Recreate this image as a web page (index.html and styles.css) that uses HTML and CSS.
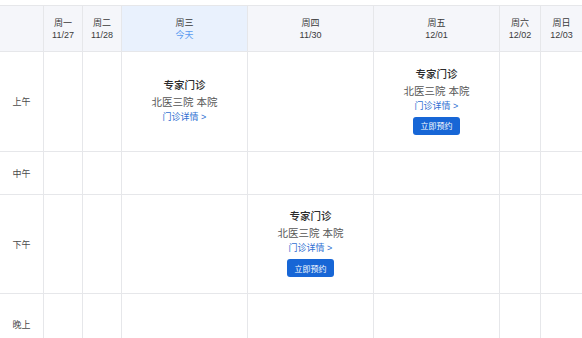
FILE: index.html
```html
<!DOCTYPE html>
<html lang="zh-CN">
<head>
<meta charset="utf-8">
<link rel="stylesheet" href="styles.css">
</head>
<body>
<div class="schedule">
  <div class="hcell corner"></div>
  <div class="hcell"><span>周一</span><span>11/27</span></div>
  <div class="hcell"><span>周二</span><span>11/28</span></div>
  <div class="hcell today"><span>周三</span><span class="today-label">今天</span></div>
  <div class="hcell"><span>周四</span><span>11/30</span></div>
  <div class="hcell"><span>周五</span><span>12/01</span></div>
  <div class="hcell"><span>周六</span><span>12/02</span></div>
  <div class="hcell"><span>周日</span><span>12/03</span></div>

  <div class="label">上午</div>
  <div class="cell"></div>
  <div class="cell"></div>
  <div class="cell">
    <div class="clinic">
      <div class="title">专家门诊</div>
      <div class="place">北医三院 本院</div>
      <a class="detail">门诊详情 &gt;</a>
    </div>
  </div>
  <div class="cell"></div>
  <div class="cell">
    <div class="clinic">
      <div class="title">专家门诊</div>
      <div class="place">北医三院 本院</div>
      <a class="detail">门诊详情 &gt;</a>
      <button class="book">立即预约</button>
    </div>
  </div>
  <div class="cell"></div>
  <div class="cell"></div>

  <div class="label">中午</div>
  <div class="cell"></div><div class="cell"></div><div class="cell"></div><div class="cell"></div><div class="cell"></div><div class="cell"></div><div class="cell"></div>

  <div class="label">下午</div>
  <div class="cell"></div>
  <div class="cell"></div>
  <div class="cell"></div>
  <div class="cell">
    <div class="clinic">
      <div class="title">专家门诊</div>
      <div class="place">北医三院 本院</div>
      <a class="detail">门诊详情 &gt;</a>
      <button class="book">立即预约</button>
    </div>
  </div>
  <div class="cell"></div>
  <div class="cell"></div>
  <div class="cell"></div>

  <div class="label">晚上</div>
  <div class="cell"></div><div class="cell"></div><div class="cell"></div><div class="cell"></div><div class="cell"></div><div class="cell"></div><div class="cell"></div>
</div>
</body>
</html>
```

FILE: styles.css
```css
html, body {
  margin: 0;
  padding: 0;
  background: #ffffff;
  overflow: hidden;
}
body {
  padding-top: 5px;
  font-family: "Liberation Sans", "Noto Sans CJK SC", sans-serif;
  color: #333333;
}
.schedule {
  display: grid;
  grid-template-columns: 43px 38px 38px 125px 125px 125px 40px 41px;
  grid-template-rows: 45px 99px 42px 98px 60px;
  gap: 1px;
  background: #e6e7ea;
  border-top: 1px solid #e6e7ea;
  width: 582px;
}
.hcell {
  background: #f5f6fa;
  display: flex;
  flex-direction: column;
  align-items: center;
  justify-content: center;
  font-size: 9px;
  line-height: 12px;
  color: #3a3a3a;
}
.hcell.today {
  background: #e9f1fd;
}
.today-label {
  color: #5a9bf0;
}
.label {
  background: #ffffff;
  display: flex;
  align-items: center;
  justify-content: center;
  font-size: 9px;
  color: #4a4a4a;
}
.cell {
  background: #ffffff;
  display: flex;
  align-items: center;
  justify-content: center;
  padding-bottom: 3px;
}
.clinic {
  display: flex;
  flex-direction: column;
  align-items: center;
}
.title {
  font-size: 10.5px;
  line-height: 17px;
  font-weight: 500;
  color: #2b2b2b;
}
.place {
  font-size: 10.5px;
  line-height: 16px;
  color: #555555;
}
.detail {
  font-size: 9px;
  line-height: 14px;
  color: #2f6fd2;
}
.book {
  margin-top: 4px;
  width: 47px;
  height: 18px;
  border: none;
  border-radius: 3px;
  background: #1766d6;
  color: #ffffff;
  font-family: "Liberation Sans", "Noto Sans CJK SC", sans-serif;
  font-size: 8px;
  padding: 0;
}
```
